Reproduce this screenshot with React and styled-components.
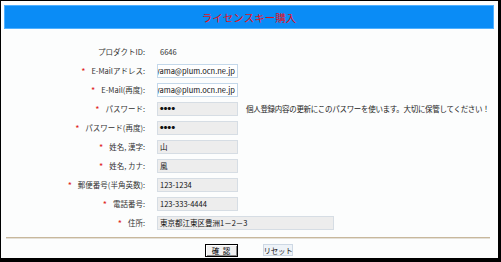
import React from 'react'
import styled, { createGlobalStyle } from 'styled-components'

const GlobalStyle = createGlobalStyle`
    body {
        margin: 0;
        background: #ffffff;
        font-family: "Noto Sans CJK JP", "DejaVu Sans", sans-serif;
    }
`

const fields = [
    { label: 'E-Mailアドレス:', value: 'yama@plum.ocn.ne.jp', kind: 'white', required: true },
    { label: 'E-Mail(再度):', value: 'yama@plum.ocn.ne.jp', kind: 'white', required: true },
    { label: 'パスワード:', value: '●●●●', kind: 'pass', required: true, note: '個人登録内容の更新にこのパスワーを使います。大切に保管してください！' },
    { label: 'パスワード(再度):', value: '●●●●', kind: 'pass', required: true },
    { label: '姓名, 漢字:', value: '山', kind: 'gray', required: true },
    { label: '姓名, カナ:', value: '風', kind: 'gray', required: true },
    { label: '郵便番号(半角英数):', value: '123-1234', kind: 'gray', required: true },
    { label: '電話番号:', value: '123-333-4444', kind: 'gray', required: true },
    { label: '住所:', value: '東京都江東区豊洲1－2－3', kind: 'gray', required: true, wide: true },
]

function App() {
    return (
        <Frame>
            <GlobalStyle />
            <Header>ライセンスキー購入</Header>

            <FormGrid>
                <Label>プロダクトID:</Label>
                <Cell><Plain>6646</Plain></Cell>

                {fields.map((f) => (
                    <React.Fragment key={f.label}>
                        <Label>
                            {f.required && <Star>*</Star>}
                            {f.label}
                        </Label>
                        <Cell>
                            <Field $kind={f.kind} $wide={f.wide}>
                                <span>{f.value}</span>
                            </Field>
                            {f.note && <Note>{f.note}</Note>}
                        </Cell>
                    </React.Fragment>
                ))}
            </FormGrid>

            <Rule />

            <Buttons>
                <ConfirmButton>確 認</ConfirmButton>
                <ResetButton>リセット</ResetButton>
            </Buttons>
        </Frame>
    )
}

export default App

const Frame = styled.div`
    width: 501px;
    height: 262px;
    box-sizing: border-box;
    border-top: 1px solid #000;
    border-left: 1px solid #000;
    border-right: 3px solid #000;
    border-bottom: 4px solid #000;
    background: #fcfdfd;
    display: flex;
    flex-direction: column;
`
const Header = styled.div`
    margin: 4px 4px 0 3px;
    height: 24px;
    box-sizing: border-box;
    background: #0a8cf6;
    border: 1px solid #4fb0ff;
    color: #e0101a;
    font-size: 10.5px;
    display: flex;
    align-items: center;
    justify-content: center;
    padding-top: 1px;
`
const FormGrid = styled.div`
    margin-top: 13px;
    display: grid;
    grid-template-columns: 148px 1fr;
    grid-auto-rows: 19px;
    column-gap: 8px;
    font-size: 7.5px;
    color: #333;
`
const Label = styled.div`
    display: flex;
    align-items: center;
    justify-content: flex-end;
    padding-right: 4px;
    white-space: nowrap;
`
const Star = styled.span`
    color: #e02020;
    font-size: 9px;
    margin-right: 6px;
    position: relative;
    top: 1px;
`
const Cell = styled.div`
    display: flex;
    align-items: center;
`
const Plain = styled.span`
    padding-left: 3px;
`
const Field = styled.div`
    width: ${(p) => (p.$wide ? '177px' : '81px')};
    height: 14px;
    box-sizing: border-box;
    border: 1px solid ${(p) => (p.$kind === 'white' ? '#c4d8ea' : '#d6dde4')};
    background: ${(p) => (p.$kind === 'white' ? '#ffffff' : '#ededed')};
    display: flex;
    align-items: center;
    justify-content: ${(p) => (p.$kind === 'white' ? 'flex-end' : 'flex-start')};
    overflow: hidden;
    white-space: nowrap;
    padding: 0 2px;
    color: #111;
    font-size: ${(p) => (p.$kind === 'pass' ? '3.5px' : '7.5px')};
    letter-spacing: ${(p) => (p.$kind === 'pass' ? '0.3px' : '0')};
`
const Note = styled.span`
    margin-left: 8px;
    white-space: nowrap;
    color: #222;
    letter-spacing: -0.3px;
`
const Rule = styled.div`
    margin: 5px 8px 0 5px;
    height: 0;
    border-top: 1px solid #c8b89c;
    border-bottom: 1px solid #e4e0d8;
`
const Buttons = styled.div`
    margin-top: 5px;
    display: flex;
    align-items: flex-start;
    padding-left: 204px;
    gap: 25px;
    font-size: 7.5px;
`
const ConfirmButton = styled.div`
    width: 33px;
    height: 13px;
    box-sizing: border-box;
    border: 1px solid #000;
    box-shadow: inset 1px 1px 0 #fff, inset -1px -1px 0 #888;
    background: #f0f0f0;
    display: flex;
    align-items: center;
    justify-content: center;
    color: #000;
    letter-spacing: 1px;
    white-space: nowrap;
`
const ResetButton = styled.div`
    width: 30px;
    height: 12px;
    box-sizing: border-box;
    border: 1px solid #cdd8e4;
    background: #eef3f8;
    display: flex;
    align-items: center;
    justify-content: center;
    color: #222;
    white-space: nowrap;
    letter-spacing: -0.3px;
`
